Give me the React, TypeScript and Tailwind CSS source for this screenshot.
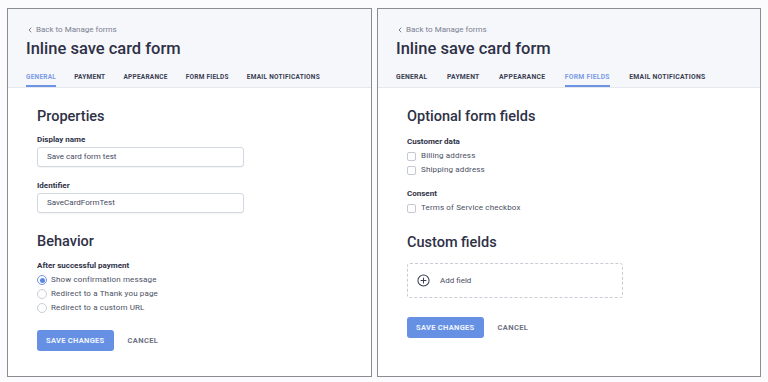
import { ChevronLeft } from 'lucide-react';

const TABS = ['General', 'Payment', 'Appearance', 'Form fields', 'Email notifications'];

// Header strip shared by both panels: back link, title and tab row.
const PanelHeader = ({ active, wide = false }: { active: string; wide?: boolean }) => (
  <div className="bg-[#f6f7fb] border-b border-[#e4e7ee] pl-[18px] pt-[14px]">
    <a className="flex h-[14px] items-center gap-[2px] text-[8px] text-[#7a7f91]">
      <ChevronLeft className="h-[8px] w-[8px]" strokeWidth={3} />
      <span>Back to Manage forms</span>
    </a>
    <h1 className="mt-[1px] text-[16.5px] font-medium leading-[22px] text-[#2e3146]">
      Inline save card form
    </h1>
    <div className={wide ? 'mt-[12px] flex gap-[19.5px] text-[6.8px]' : 'mt-[12px] flex gap-[18px] text-[6.5px]'}>
      {TABS.map((tab) => (
        <div
          key={tab}
          className={
            tab === active
              ? 'border-b-2 border-[#6d93e6] pb-[3px] font-bold uppercase leading-[10px] tracking-[0.25px] text-[#7b9ce6]'
              : 'border-b-2 border-transparent pb-[3px] font-bold uppercase leading-[10px] tracking-[0.25px] text-[#3a3d52]'
          }
        >
          {tab}
        </div>
      ))}
    </div>
  </div>
);

const Label = ({ children, className = '' }: { children: React.ReactNode; className?: string }) => (
  <div className={`text-[8px] font-bold leading-[11px] text-[#2e3146] ${className}`}>{children}</div>
);

const Heading = ({ children, className = '' }: { children: React.ReactNode; className?: string }) => (
  <h2 className={`text-[14.5px] font-medium leading-[20px] text-[#2e3146] ${className}`}>{children}</h2>
);

const TextInput = ({ value }: { value: string }) => (
  <div className="mt-[2px] flex h-[20px] w-[207px] items-center rounded-[3px] border border-[#d3d7df] bg-white pl-[9px] text-[8px] text-[#454a5e] shadow-[0_1px_1px_rgba(0,0,0,0.04)]">
    {value}
  </div>
);

const Radio = ({ label, checked = false }: { label: string; checked?: boolean }) => (
  <div className="flex h-[14px] items-center gap-[4px]">
    {checked ? (
      <span className="flex h-[10px] w-[10px] items-center justify-center rounded-full border border-[#6d93e6] bg-white">
        <span className="h-[5px] w-[5px] rounded-full bg-[#5c86e4]" />
      </span>
    ) : (
      <span className="h-[10px] w-[10px] rounded-full border border-[#c9cdd6] bg-white" />
    )}
    <span className="text-[8px] tracking-[0.15px] text-[#4a4f63]">{label}</span>
  </div>
);

const Checkbox = ({ label }: { label: string }) => (
  <div className="flex h-[14px] items-center gap-[5px]">
    <span className="h-[9px] w-[9px] rounded-[2px] border border-[#c4c8d1] bg-white" />
    <span className="text-[8px] tracking-[0.15px] text-[#4a4f63]">{label}</span>
  </div>
);

const Actions = ({ className = '' }: { className?: string }) => (
  <div className={`flex items-center gap-[14px] ${className}`}>
    <button className="flex h-[21px] items-center rounded-[3px] bg-[#6590e4] px-[9px] text-[7.5px] font-bold uppercase tracking-[0.3px] text-white/90">
      Save changes
    </button>
    <button className="text-[7.5px] font-bold uppercase tracking-[0.4px] text-[#6d7184]">Cancel</button>
  </div>
);

const GeneralPanel = () => (
  <section className="h-[369px] w-[365px] border border-[#8b8c90] bg-white">
    <PanelHeader active="General" />
    <div className="pl-[29px] pt-[19px]">
      <Heading>Properties</Heading>
      <Label className="mt-[7px]">Display name</Label>
      <TextInput value="Save card form test" />
      <Label className="mt-[13px]">Identifier</Label>
      <TextInput value="SaveCardFormTest" />
      <Heading className="mt-[19px]">Behavior</Heading>
      <Label className="mt-[8px]">After successful payment</Label>
      <div className="mt-[2px]">
        <Radio label="Show confirmation message" checked />
        <Radio label="Redirect to a Thank you page" />
        <Radio label="Redirect to a custom URL" />
      </div>
      <Actions className="mt-[15px]" />
    </div>
  </section>
);

const FormFieldsPanel = () => (
  <section className="h-[369px] w-[384px] border border-[#8b8c90] bg-white">
    <PanelHeader active="Form fields" wide />
    <div className="pl-[29px] pt-[19px]">
      <Heading>Optional form fields</Heading>
      <Label className="mt-[9px]">Customer data</Label>
      <div className="mt-[2px]">
        <Checkbox label="Billing address" />
        <Checkbox label="Shipping address" />
      </div>
      <Label className="mt-[11px]">Consent</Label>
      <div className="mt-[2px]">
        <Checkbox label="Terms of Service checkbox" />
      </div>
      <Heading className="mt-[18px]">Custom fields</Heading>
      <div className="mt-[10px] flex h-[35px] w-[216px] items-center gap-[10px] rounded-[3px] border border-dashed border-[#c9ccd4] pl-[9px]">
        <svg width="13" height="13" viewBox="0 0 14 14" fill="none" stroke="#3a3d52" strokeWidth="1.1">
          <circle cx="7" cy="7" r="6" />
          <path d="M7 4.3v5.4M4.3 7h5.4" strokeLinecap="round" />
        </svg>
        <span className="text-[8px] text-[#4a4f63]">Add field</span>
      </div>
      <Actions className="mt-[19px]" />
    </div>
  </section>
);

export default function App() {
  return (
    <div
      className="flex h-[382px] w-[768px] gap-[5px] bg-[#fbfbfd] pl-[7px] pt-[8px]"
      style={{ fontFamily: 'Roboto, "Noto Sans", sans-serif' }}
    >
      <GeneralPanel />
      <FormFieldsPanel />
    </div>
  );
}
